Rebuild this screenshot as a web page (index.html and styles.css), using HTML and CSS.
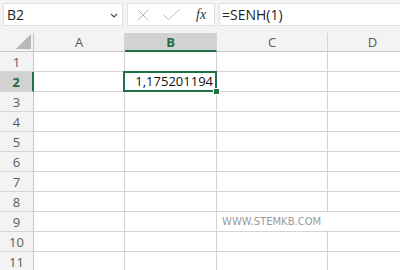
FILE: index.html
```html
<!DOCTYPE html>
<html lang="es">
<head>
    <meta charset="UTF-8" />
    <title>SENH</title>
    <link rel="stylesheet" href="styles.css">
</head>
<body>

    <div class="toolbar">
        <div class="name-box">
            <span>B2</span>
            <svg class="chevron" width="8" height="5" viewBox="0 0 8 5">
                <path d="M1 1 L4 4 L7 1" fill="none" stroke="#444" stroke-width="1.1" />
            </svg>
        </div>
        <div class="fx-box">
            <svg width="12" height="12" viewBox="0 0 12 12">
                <path d="M0.5 0.5 L11.5 11.5 M11.5 0.5 L0.5 11.5" stroke="#b8b8b8" stroke-width="1" fill="none" />
            </svg>
            <svg class="check" width="17" height="11" viewBox="0 0 17 11">
                <path d="M0.5 5.5 L5.5 10.5 L16.5 0.5" stroke="#b8b8b8" stroke-width="1" fill="none" />
            </svg>
            <span class="fx">fx</span>
        </div>
        <div class="formula">=SENH(1)</div>
    </div>

    <div class="sheet">
        <div class="corner"><span class="tri"></span></div>
        <div class="col-head">A</div>
        <div class="col-head active">B</div>
        <div class="col-head">C</div>
        <div class="col-head">D</div>

        <div class="row-head">1</div>
        <div class="cell"></div><div class="cell"></div><div class="cell"></div><div class="cell"></div>

        <div class="row-head active">2</div>
        <div class="cell"></div>
        <div class="cell num selected">1,175201194</div>
        <div class="cell"></div><div class="cell"></div>

        <div class="row-head">3</div>
        <div class="cell"></div><div class="cell"></div><div class="cell"></div><div class="cell"></div>
        <div class="row-head">4</div>
        <div class="cell"></div><div class="cell"></div><div class="cell"></div><div class="cell"></div>
        <div class="row-head">5</div>
        <div class="cell"></div><div class="cell"></div><div class="cell"></div><div class="cell"></div>
        <div class="row-head">6</div>
        <div class="cell"></div><div class="cell"></div><div class="cell"></div><div class="cell"></div>
        <div class="row-head">7</div>
        <div class="cell"></div><div class="cell"></div><div class="cell"></div><div class="cell"></div>
        <div class="row-head">8</div>
        <div class="cell"></div><div class="cell"></div><div class="cell"></div><div class="cell"></div>
        <div class="row-head">9</div>
        <div class="cell"></div><div class="cell"></div>
        <div class="cell watermark-cell"><span class="watermark">WWW.STEMKB.COM</span></div>
        <div class="cell"></div>
        <div class="row-head">10</div>
        <div class="cell"></div><div class="cell"></div><div class="cell"></div><div class="cell"></div>
        <div class="row-head">11</div>
        <div class="cell"></div><div class="cell"></div><div class="cell"></div><div class="cell"></div>
    </div>

</body>
</html>
```

FILE: styles.css
```css
body {
    margin: 0;
    font-family: "Open Sans", "Noto Sans", sans-serif;
    background-color: #f3f3f3;
    overflow: hidden;
}

.toolbar {
    display: flex;
    align-items: flex-start;
    height: 33px;
    padding: 3px 0 0 3px;
    box-sizing: border-box;
    gap: 4px;
}

.name-box, .fx-box, .formula {
    background: white;
    border: 1px solid #e1e1e1;
    height: 23px;
    box-sizing: border-box;
    display: flex;
    align-items: center;
}

.name-box {
    width: 120px;
    padding: 0 4px 0 3px;
    justify-content: space-between;
    font-size: 14px;
    color: #222;
}

    .name-box .chevron {
        margin-top: 2px;
    }

.fx-box {
    width: 88px;
    padding-left: 9px;
    gap: 14px;
}

    .fx-box .check {
        margin-top: -1px;
    }

    .fx-box .fx {
        font-family: "Liberation Serif", serif;
        font-style: italic;
        font-size: 14px;
        color: #333;
        margin-left: 2px;
    }

.formula {
    flex: 1;
    padding-left: 2px;
    font-size: 14px;
    color: #222;
    border-right: none;
}

.sheet {
    display: grid;
    grid-template-columns: 34px 91px 92px 111px 90px;
    grid-template-rows: 19px repeat(11, 20px);
    background: white;
}

.corner {
    background: #f3f3f3;
    border-right: 1px solid #c6c6c6;
    border-bottom: 1px solid #c6c6c6;
    position: relative;
}

    .corner .tri {
        position: absolute;
        right: 2px;
        bottom: 2px;
        width: 0;
        height: 0;
        border-left: 15px solid transparent;
        border-bottom: 15px solid #b7b7b7;
    }

.col-head, .row-head {
    background: #f3f3f3;
    color: #5a5a5a;
    font-size: 13px;
    display: flex;
    align-items: center;
    justify-content: center;
    box-sizing: border-box;
}

.col-head {
    border-right: 1px solid #d4d4d4;
    border-bottom: 1px solid #c6c6c6;
}

    .col-head.active {
        background: #d2d2d2;
        color: #1e6b41;
        font-weight: bold;
        border-bottom: 2px solid #217346;
    }

.row-head {
    border-right: 1px solid #c6c6c6;
    border-bottom: 1px solid #d4d4d4;
}

    .row-head.active {
        background: #d2d2d2;
        color: #1e6b41;
        font-weight: bold;
        border-right: 2px solid #217346;
    }

.cell {
    border-right: 1px solid #d4d4d4;
    border-bottom: 1px solid #d4d4d4;
    box-sizing: border-box;
    position: relative;
}

.num {
    text-align: right;
    font-size: 13px;
    color: #111;
    line-height: 19px;
    padding-right: 3px;
}

.selected::after {
    content: "";
    position: absolute;
    left: -2px;
    top: -1px;
    right: -1px;
    bottom: -1px;
    border: 2px solid #217346;
}

.selected::before {
    content: "";
    position: absolute;
    right: -4px;
    bottom: -4px;
    width: 5px;
    height: 5px;
    background: #217346;
    border: 1px solid white;
    z-index: 1;
}

.watermark-cell {
    overflow: visible;
}

.watermark {
    position: absolute;
    left: 1px;
    top: 0;
    height: 19px;
    padding: 0 14px 0 4px;
    background: white;
    color: #9a9a9a;
    font-family: "DejaVu Sans", sans-serif;
    font-size: 10px;
    line-height: 19px;
    white-space: nowrap;
    z-index: 1;
}
```
